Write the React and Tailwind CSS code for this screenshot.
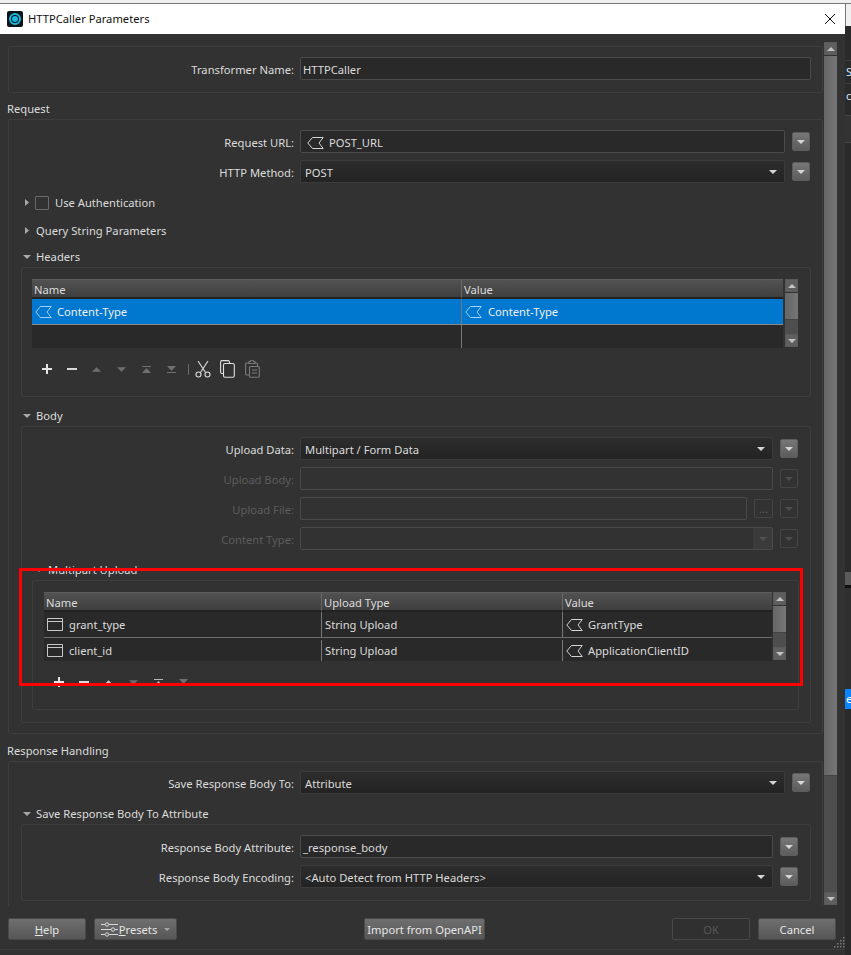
const Tag = ({ color = '#d4d4d4' }) => (
  <svg width="17" height="12" viewBox="0 0 17 12" fill="none" stroke={color} className="shrink-0">
    <path d="M.8 6 5.5.5h10.7L12 6l4.2 5.500H5.500z" />
  </svg>
);

const WindowIcon = () => (
  <svg width="16" height="13" viewBox="0 0 16 13" fill="none" stroke="#c8c8c8" className="shrink-0">
    <path d="M.5.5h15v12H.5zM.5 3.5h15" />
  </svg>
);

const Down = ({ color = '#d6d6d6', w = 8, h = 4 }) => (
  <svg width={w} height={h} viewBox="0 0 8 4" fill={color} className="shrink-0">
    <path d="M0 0h8L4 4z" />
  </svg>
);

const Up = ({ color = '#d6d6d6', w = 8, h = 4 }) => (
  <svg width={w} height={h} viewBox="0 0 8 4" fill={color} className="shrink-0">
    <path d="M0 4h8L4 0z" />
  </svg>
);

const Right = () => (
  <svg width="4" height="7" viewBox="0 0 4 7" fill="#a8a8a8" className="shrink-0">
    <path d="M0 0v7l4-3.5z" />
  </svg>
);

const DropBtn = ({ disabled }) => disabled ? (
  <div className="w-[18px] h-[19px] rounded-[2px] border border-[#454545] flex items-center justify-center shrink-0">
    <Down color="#4d4d4d" />
  </div>
) : (
  <div className="w-[18px] h-[19px] rounded-[2px] border border-[#5c5c5c] bg-gradient-to-b from-[#777777] to-[#5c5c5c] flex items-center justify-center shrink-0">
    <Down />
  </div>
);

const Field = ({ label, disabled, select, mt = '', narrow, dropClass = 'w-[485px]', children, extra }) => (
  <div className={`flex items-center h-[23px] ${mt}`}>
    <div className={`flex-1 text-right pr-[6px] pt-[2px] whitespace-nowrap ${disabled ? 'text-[#5c5c5c]' : ''}`}>{label}</div>
    <div
      className={`h-[23px] pt-[2px] rounded-[2px] border flex items-center shrink-0 relative ${dropClass} ${
        disabled
          ? 'border-[#4a4a4a] bg-[#323232]'
          : select
            ? 'border-[#3b3b3b] bg-gradient-to-b from-[#2d2d2d] to-[#232323]'
            : 'border-[#4b4b4b] bg-[#292929]'
      }`}
    >
      {children}
      {select && !disabled && <div className="absolute right-[7px] top-[9px]"><Down /></div>}
      {select && disabled && (
        <div className="absolute right-0 top-0 bottom-0 w-[19px] bg-[#3a3a3a] flex items-center justify-center"><Down color="#505050" /></div>
      )}
    </div>
    {extra}
    {!narrow && <div className="ml-[7px]"><DropBtn disabled={disabled} /></div>}
  </div>
);

const ScrollBar = ({ thumbClass, trackClass }) => (
  <div className="w-[13px] flex flex-col shrink-0">
    <div className="h-[13px] border border-[#5a5a5a] bg-[#5f5f5f] flex items-center justify-center"><Up color="#c4c4c4" /></div>
    <div className={`mt-px bg-gradient-to-r from-[#666666] to-[#767676] border-b border-[#444444] ${thumbClass}`} />
    <div className={`bg-[#4e4e4e] ${trackClass}`} />
    <div className="h-[13px] border border-[#5a5a5a] bg-[#5f5f5f] flex items-center justify-center"><Down color="#c4c4c4" /></div>
  </div>
);

const HeaderCell = ({ children, last }) => (
  <div className={`h-[20px] pl-[2px] pt-[2px] flex items-center bg-gradient-to-b from-[#525252] to-[#3f3f3f] border-t border-[#5c5c5c] border-b-2 border-b-[#222222] ${last ? '' : 'border-r border-r-[#686868]'}`}>
    {children}
  </div>
);

const Tool = ({ children }) => <div className="w-[25px] h-[22px] flex items-center justify-center shrink-0">{children}</div>;

const Plus = () => (
  <svg width="10" height="10" viewBox="0 0 10 10" fill="#e4e4e4"><path d="M4 0h2v4h4v2H6v4H4V6H0V4h4z" /></svg>
);
const Minus = () => (
  <svg width="10" height="2" viewBox="0 0 10 2" fill="#d8d8d8"><path d="M0 0h10v2H0z" /></svg>
);
const ToTop = ({ color }) => (
  <svg width="9" height="7" viewBox="0 0 9 7" fill={color}><path d="M0 0h9v1H0zM4.500 2 9 7H0z" /></svg>
);
const ToBottom = ({ color }) => (
  <svg width="9" height="7" viewBox="0 0 9 7" fill={color}><path d="M0 0h9L4.500 5zM0 6h9v1H0z" /></svg>
);

const MoveTools = ({ bright }) => (
  <>
    <Tool><Plus /></Tool>
    <Tool><Minus /></Tool>
    <Tool><Up color={bright ? '#c8c8c8' : '#6f6f6f'} w={9} h={5} /></Tool>
    <Tool><Down color="#6f6f6f" w={9} h={5} /></Tool>
    <Tool><ToTop color={bright ? '#b8b8b8' : '#6f6f6f'} /></Tool>
    <Tool><ToBottom color="#6f6f6f" /></Tool>
  </>
);

const Heading = ({ children }) => <div className="h-[26px] pt-[6px] -ml-px flex items-center">{children}</div>;

const TreeLabel = ({ children, className = '', pl = 'pl-[14px]' }) => (
  <div className={`h-[20px] flex items-center ${pl} ${className}`}>
    <div className="w-[8px] flex justify-center"><Down color="#a8a8a8" /></div>
    <span className="ml-[5px]">{children}</span>
  </div>
);

const Btn = ({ className = '', children }) => (
  <div className={`h-[22px] pt-px rounded-[2px] border border-[#4a4a4a] bg-gradient-to-b from-[#6f6f6f] to-[#565656] flex items-center justify-center shrink-0 whitespace-nowrap text-[#e6e6e6] ${className}`}>
    {children}
  </div>
);

export default function App() {
  return (
    <div className="relative w-[851px] h-[955px] overflow-hidden bg-[#f0f0f0] font-['Noto_Sans',sans-serif] text-[11.2px] leading-none text-[#dcdcdc]">
      <div className="h-[3px]" />
      <div className="flex">
        <div className="w-[845px] h-[952px] flex flex-col bg-[#323232] shrink-0">
          <div className="h-[31px] border-t border-[#777777] bg-white flex items-center text-[#111111] relative">
            <div className="ml-[7px] w-[16px] h-[16px] rounded-[2px] bg-[#0c1418] flex items-center justify-center">
              <div className="w-[12px] h-[12px] rounded-full border-2 border-[#17b9e0] flex items-center justify-center">
                <div className="w-[6px] h-[6px] rounded-full bg-[#17b9e0]" />
              </div>
            </div>
            <span className="ml-[5px]">HTTPCaller Parameters</span>
            <svg className="ml-auto mr-[10px]" width="10" height="10" viewBox="0 0 10 10" stroke="#111111" fill="none">
              <path d="M0 0l10 10M10 0 0 10" />
            </svg>
          </div>

          <div className="flex pt-[8px]">
            <div className="w-[824px] h-[864px] pl-[8px] overflow-hidden shrink-0">
              {/* name */}
              <div className="mt-[4px] w-[815px] h-[47px] border border-[#3d3d3d] rounded-[2px] pt-[10px] pr-[11px]">
                <Field label="Transformer Name:" narrow dropClass="w-[511px]">
                  <span className="pl-[2px]">HTTPCaller</span>
                </Field>
              </div>

              <Heading>Request</Heading>
              <div className="w-[815px] h-[615px] border border-[#3d3d3d] rounded-[2px] pt-[10px]">
                <div className="pr-[12px]">
                  <Field label="Request URL:">
                    <div className="pl-[6px] flex items-center gap-[5px]"><Tag /><span>POST_URL</span></div>
                  </Field>
                  <Field label="HTTP Method:" select mt="mt-[7px]"><span className="pl-[4px]">POST</span></Field>
                </div>

                <div className="mt-[8px] h-[23px] flex items-center pl-[16px]">
                  <Right />
                  <div className="ml-[6px] w-[14px] h-[14px] border border-[#6a6a6a] rounded-[1px]" />
                  <span className="ml-[6px]">Use Authentication</span>
                </div>
                <div className="mt-[5px] h-[23px] flex items-center pl-[16px]">
                  <Right />
                  <span className="ml-[7px]">Query String Parameters</span>
                </div>

                <TreeLabel className="mt-[5px]">Headers</TreeLabel>
                <div className="ml-[12px] w-[790px] h-[130px] border border-[#3d3d3d] rounded-[2px] pt-[11px] pl-[10px]">
                  <div className="flex h-[69px]">
                    <div className="w-[751px] bg-[#292929]">
                      <div className="grid grid-cols-[430px_321px]">
                        <HeaderCell>Name</HeaderCell>
                        <HeaderCell last>Value</HeaderCell>
                      </div>
                      <div className="grid grid-cols-[430px_321px] h-[26px] bg-[#0078cf] border-b border-[#8a8a8a] text-[#f0f0f0]">
                        <div className="flex items-center pl-[3px] gap-[5px] border-r border-[#777777]"><Tag color="#9fd0f2" /><span>Content-Type</span></div>
                        <div className="flex items-center pl-[3px] gap-[6px]"><Tag color="#9fd0f2" /><span>Content-Type</span></div>
                      </div>
                      <div className="grid grid-cols-[430px_321px] h-[23px]">
                        <div className="border-r border-[#777777]" />
                        <div />
                      </div>
                    </div>
                    <div className="ml-[2px] flex">
                      <ScrollBar thumbClass="h-[27px]" trackClass="h-[14px]" />
                    </div>
                  </div>
                  <div className="mt-[10px] ml-[2px] flex items-center">
                    <MoveTools />
                    <div className="ml-[4px] w-px h-[11px] bg-[#6a6a6a]" />
                    <div className="ml-px flex">
                      <Tool>
                        <svg width="16" height="17" viewBox="0 0 16 17" fill="none" stroke="#dcdcdc" strokeWidth="1.1">
                          <path d="M3 0l7.500 11.500M13 0 5.500 11.500" />
                          <circle cx="3.500" cy="13.500" r="2.500" />
                          <circle cx="12.500" cy="13.500" r="2.500" />
                        </svg>
                      </Tool>
                      <Tool>
                        <svg width="15" height="18" viewBox="0 0 15 18" fill="none" stroke="#e0e0e0" strokeWidth="1.1">
                          <path d="M3 13.500H2A1.500 1.500 0 0 1 .6 12V2A1.500 1.500 0 0 1 2 .6h6A1.500 1.500 0 0 1 9.500 2v1" />
                          <rect x="3.500" y="3.500" width="10.800" height="13.800" rx="1.500" />
                        </svg>
                      </Tool>
                      <Tool>
                        <svg width="15" height="18" viewBox="0 0 15 18" fill="none" stroke="#7a7a7a" strokeWidth="1.1">
                          <path d="M4 3H1.500A1 1 0 0 0 .6 4v10a1 1 0 0 0 1 1H4M4 3.500V1.500h1.500a1.500 1.500 0 0 1 3 0H10v2H4zM10 3h1.500a1 1 0 0 1 1 1v2.500" />
                          <rect x="4.500" y="6.500" width="9.800" height="10.800" rx="1" />
                          <path d="M7 10h5M7 13h5" />
                        </svg>
                      </Tool>
                    </div>
                  </div>
                </div>

                <TreeLabel className="mt-[9px]">Body</TreeLabel>
                <div className="ml-[12px] w-[790px] h-[297px] border border-[#3d3d3d] rounded-[2px] pt-[10px]">
                  <div className="pr-[12px]">
                    <Field label="Upload Data:" select dropClass="w-[473px]"><span className="pl-[4px]">Multipart / Form Data</span></Field>
                    <Field label="Upload Body:" disabled mt="mt-[7px]" dropClass="w-[473px]" />
                    <Field
                      label="Upload File:"
                      disabled
                      mt="mt-[7px]"
                      dropClass="w-[447px]"
                      extra={
                        <div className="ml-[7px] w-[19px] h-[19px] rounded-[2px] border border-[#454545] flex items-center justify-center text-[#5c5c5c] shrink-0">...</div>
                      }
                    />
                    <Field label="Content Type:" disabled select mt="mt-[7px]" dropClass="w-[473px]" />
                  </div>

                  <TreeLabel className="mt-[10px]" pl="pl-[13px]">Multipart Upload</TreeLabel>
                  <div className="ml-[10px] w-[767px] h-[130px] border border-[#3d3d3d] rounded-[2px] pt-[11px] pl-[11px]">
                    <div className="flex h-[69px]">
                      <div className="w-[728px] bg-[#292929]">
                        <div className="grid grid-cols-[278px_241px_209px]">
                          <HeaderCell>Name</HeaderCell>
                          <HeaderCell>Upload Type</HeaderCell>
                          <HeaderCell last>Value</HeaderCell>
                        </div>
                        {[
                          ['grant_type', 'GrantType'],
                          ['client_id', 'ApplicationClientID'],
                        ].map(([name, value], i) => (
                          <div key={name} className={`grid grid-cols-[278px_241px_209px] ${i === 0 ? 'h-[26px] border-b border-[#6e6e6e]' : 'h-[23px] pt-[2px]'}`}>
                            <div className="flex items-center pl-[3px] gap-[6px] border-r border-[#777777]"><WindowIcon /><span>{name}</span></div>
                            <div className="flex items-center pl-[3px] border-r border-[#777777]">String Upload</div>
                            <div className="flex items-center pl-[3px] gap-[5px]"><Tag /><span>{value}</span></div>
                          </div>
                        ))}
                      </div>
                      <div className="ml-px flex">
                        <ScrollBar thumbClass="h-[27px]" trackClass="h-[14px]" />
                      </div>
                    </div>
                    <div className="mt-[10px] ml-[2px] flex items-center">
                      <MoveTools bright />
                    </div>
                  </div>
                </div>
              </div>

              <div className="mt-px"><Heading>Response Handling</Heading></div>
              <div className="w-[815px] h-[180px] border border-[#3d3d3d] rounded-[2px] pt-[9px]">
                <div className="pr-[12px]">
                  <Field label="Save Response Body To:" select><span className="pl-[4px]">Attribute</span></Field>
                </div>
                <TreeLabel className="mt-[10px]">Save Response Body To Attribute</TreeLabel>
                <div className="ml-[12px] w-[790px] h-[77px] border border-[#3d3d3d] rounded-[2px] pt-[10px] pr-[12px]">
                  <Field label="Response Body Attribute:" dropClass="w-[473px]"><span className="pl-[2px]">_response_body</span></Field>
                  <Field label="Response Body Encoding:" select mt="mt-[7px]" dropClass="w-[473px]">
                    <span className="pl-[4px]">&lt;Auto Detect from HTTP Headers&gt;</span>
                  </Field>
                </div>
              </div>
            </div>
            <div className="h-[864px] flex">
              <ScrollBar thumbClass="h-[720px]" trackClass="h-[116px]" />
            </div>
          </div>

          <div className="mt-[12px] flex pl-[8px]">
            <Btn className="w-[78px]"><span><span className="underline">H</span>elp</span></Btn>
            <Btn className="ml-[8px] w-[83px]">
              <svg width="17" height="15" viewBox="0 0 17 15" fill="none" stroke="#d8d8d8" className="mr-px">
                <path d="M0 2.500h4M8 2.500h9M0 7.500h10M14 7.500h3M0 12.500h4M8 12.500h9" />
                <circle cx="6" cy="2.500" r="1.700" />
                <circle cx="12" cy="7.500" r="1.700" />
                <circle cx="6" cy="12.500" r="1.700" />
              </svg>
              <span><span className="underline">P</span>resets</span>
              <span className="ml-[7px]"><Down color="#a8a8a8" w={6} h={3} /></span>
            </Btn>
            <Btn className="ml-[187px] w-[121px]">Import from OpenAPI</Btn>
            <div className="ml-[187px] w-[78px] h-[22px] pt-px rounded-[2px] border border-[#484848] bg-[#303030] flex items-center justify-center text-[#555555]">OK</div>
            <Btn className="ml-[8px] w-[78px]">Cancel</Btn>
          </div>

          <div className="mt-[9px] h-px bg-[#3c3c3c]" />
        </div>

        {/* window behind the dialog */}
        <div className="w-[6px] h-[952px] overflow-hidden bg-[#2a2a2a] text-[#cfe6ff]">
          <div className="h-[23px] border-t border-l border-[#777777] bg-[#f0f0f0]" />
          <div className="h-[34px]" />
          <div className="h-[23px] border-t border-[#3e3e3e] pl-px flex items-center">S</div>
          <div className="h-[32px] border-t border-[#3e3e3e] pl-px pb-[8px] flex items-center">c</div>
          <div className="h-[28px] bg-[#333333] border-t border-[#444444] border-b" />
          <div className="h-[429px]" />
          <div className="h-[13px] bg-[#5a5a5a]" />
          <div className="h-[3px] bg-[#111111]" />
          <div className="h-[101px] bg-[#2f2f2f]" />
          <div className="h-[20px] bg-[#0a84ff] text-white pl-px flex items-center">e</div>
        </div>
      </div>

      {/* resize grip */}
      <svg className="absolute left-[833px] top-[937px]" width="12" height="12" viewBox="0 0 12 12" fill="#777777">
        <path d="M10 0h1.500v1.500H10zM7 3h1.500v1.500H7zM10 3h1.500v1.500H10zM4 6h1.500v1.500H4zM7 6h1.500v1.500H7zM10 6h1.500v1.500H10zM1 9h1.500v1.500H1zM4 9h1.500v1.500H4zM7 9h1.500v1.500H7zM10 9h1.500v1.500H10z" />
      </svg>

      {/* red annotation box */}
      <div className="absolute left-[19px] top-[568px] w-[784px] h-[118px] border-[3px] border-[#ff0000]" />
    </div>
  );
}
